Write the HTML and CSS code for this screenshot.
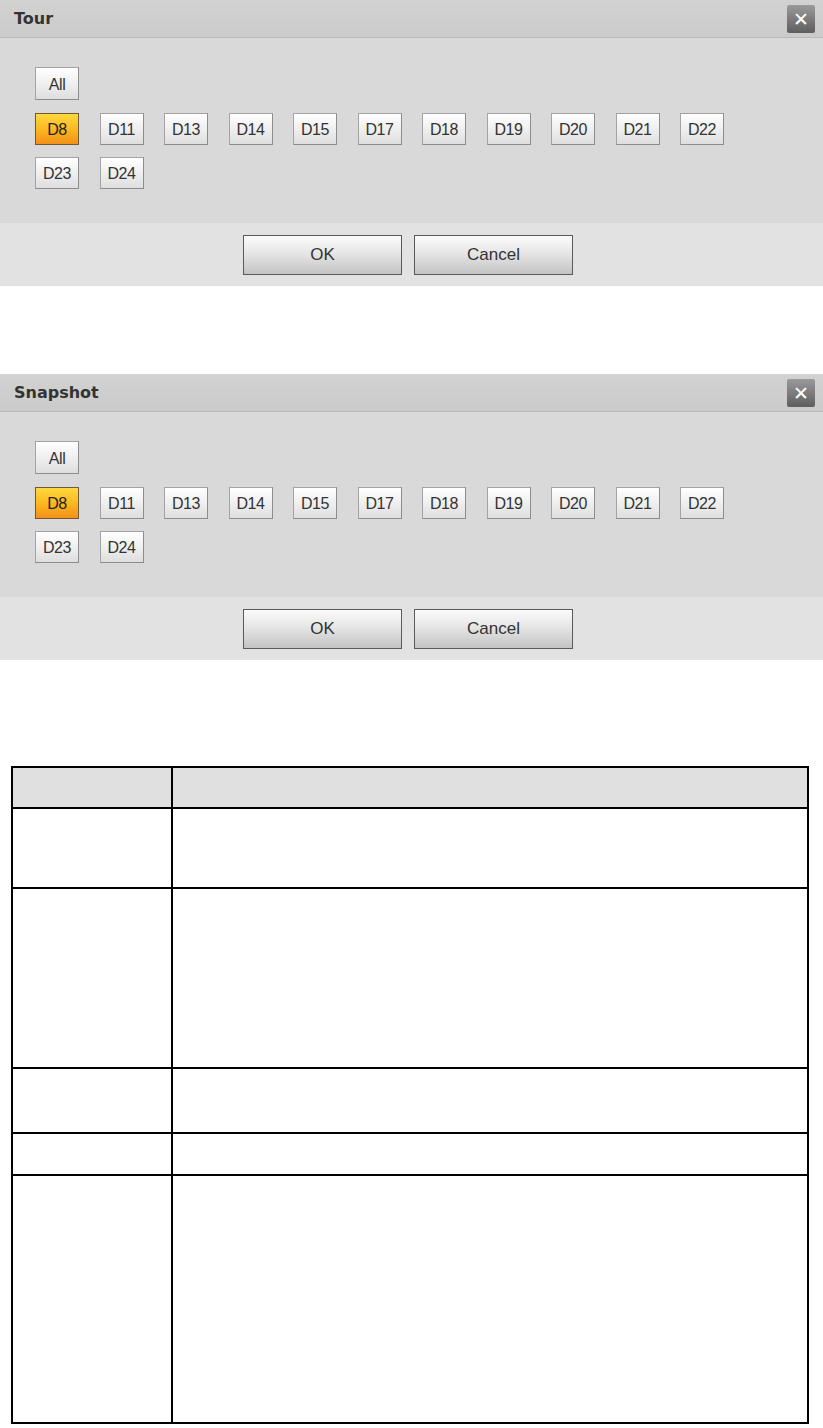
FILE: index.html
```html
<!DOCTYPE html>
<html lang="en">
<head>
    <meta charset="UTF-8">
    <meta name="viewport" content="width=device-width, initial-scale=1.0">
    <title>Tour / Snapshot</title>
    <link rel="stylesheet" href="styles.css">
</head>
<body>

<!-- Tour dialog -->
<div class="dialog">
    <div class="dialog-title">
        <span>Tour</span>
        <span class="close">&#x2715;</span>
    </div>
    <div class="dialog-body">
        <div class="row-all">
            <button class="chip">All</button>
        </div>
        <div class="chips">
            <button class="chip active">D8</button>
            <button class="chip">D11</button>
            <button class="chip">D13</button>
            <button class="chip">D14</button>
            <button class="chip">D15</button>
            <button class="chip">D17</button>
            <button class="chip">D18</button>
            <button class="chip">D19</button>
            <button class="chip">D20</button>
            <button class="chip">D21</button>
            <button class="chip">D22</button>
            <button class="chip">D23</button>
            <button class="chip">D24</button>
        </div>
    </div>
    <div class="dialog-footer">
        <button class="btn">OK</button>
        <button class="btn">Cancel</button>
    </div>
</div>

<!-- Snapshot dialog -->
<div class="dialog second">
    <div class="dialog-title">
        <span>Snapshot</span>
        <span class="close">&#x2715;</span>
    </div>
    <div class="dialog-body">
        <div class="row-all">
            <button class="chip">All</button>
        </div>
        <div class="chips">
            <button class="chip active">D8</button>
            <button class="chip">D11</button>
            <button class="chip">D13</button>
            <button class="chip">D14</button>
            <button class="chip">D15</button>
            <button class="chip">D17</button>
            <button class="chip">D18</button>
            <button class="chip">D19</button>
            <button class="chip">D20</button>
            <button class="chip">D21</button>
            <button class="chip">D22</button>
            <button class="chip">D23</button>
            <button class="chip">D24</button>
        </div>
    </div>
    <div class="dialog-footer">
        <button class="btn">OK</button>
        <button class="btn">Cancel</button>
    </div>
</div>

<!-- Parameter table (empty) -->
<table class="params">
    <tr class="head"><th></th><th></th></tr>
    <tr class="r2"><td></td><td></td></tr>
    <tr class="r3"><td></td><td></td></tr>
    <tr class="r4"><td></td><td></td></tr>
    <tr class="r5"><td></td><td></td></tr>
    <tr class="r6"><td></td><td></td></tr>
</table>

</body>
</html>
```

FILE: styles.css
```css
body {
    margin: 0;
    background-color: white;
    font-family: "Liberation Sans", Arial, sans-serif;
}

/* Dialog */
.dialog {
    width: 823px;
    background-color: #d9d9d9;
}

.dialog.second {
    margin-top: 88px;
}

.dialog-title {
    height: 37px;
    border-bottom: 1px solid #b9b9b9;
    background: linear-gradient(#d2d2d2, #cbcbcb);
    display: flex;
    align-items: center;
    justify-content: space-between;
    padding: 0 8px 0 14px;
    font-family: "DejaVu Sans", Verdana, sans-serif;
    font-weight: bold;
    font-size: 16px;
    color: #333;
}

.close {
    width: 28px;
    height: 28px;
    margin-top: 1px;
    border-radius: 2px;
    background: linear-gradient(#9a9a9a, #5e5e5e);
    color: white;
    font-family: "DejaVu Sans", sans-serif;
    font-size: 19px;
    display: flex;
    align-items: center;
    justify-content: center;
}

.dialog-body {
    height: 156px;
    padding: 29px 0 0 35px;
    background-color: #d9d9d9;
}

.row-all {
    margin-bottom: 13px;
}

.chips {
    display: flex;
    flex-wrap: wrap;
    width: 720px;
    column-gap: 20.5px;
    row-gap: 12px;
}

.chip {
    width: 44px;
    height: 32px;
    padding: 2px 0 0;
    border: 1px solid #a3a3a3;
    border-right-color: #8c8c8c;
    border-bottom-color: #8c8c8c;
    background: linear-gradient(#ffffff, #ececec 60%, #dedede);
    font-family: "Liberation Sans", Arial, sans-serif;
    font-size: 16px;
    letter-spacing: -0.4px;
    color: #333;
}

.row-all .chip {
    height: 33px;
}

.chip.active {
    border-color: #6e5a3a;
    background: linear-gradient(#ffd93e, #fbb51f 55%, #f3901a);
    color: #222;
}

.dialog-footer {
    height: 63px;
    background-color: #e2e2e2;
    display: flex;
    justify-content: center;
    align-items: center;
    gap: 12px;
    padding-right: 7px;
}

.btn {
    width: 159px;
    height: 40px;
    border: 1px solid #5a5a5a;
    background: linear-gradient(#fbfbfb, #e6e6e6 45%, #c3c3c3);
    font-family: "Liberation Sans", Arial, sans-serif;
    font-size: 17px;
    color: #333;
}

/* Table */
.params {
    margin: 106px 0 0 11px;
    width: 798px;
    border-collapse: collapse;
}

.params th,
.params td {
    border: 2px solid #000;
    padding: 0;
}

.params th:first-child,
.params td:first-child {
    width: 158px;
}

.params .head th {
    background-color: #e0e0e0;
    height: 39px;
}

.params .r2 td { height: 78px; }
.params .r3 td { height: 178px; }
.params .r4 td { height: 63px; }
.params .r5 td { height: 40px; }
.params .r6 td { height: 246px; }
```
